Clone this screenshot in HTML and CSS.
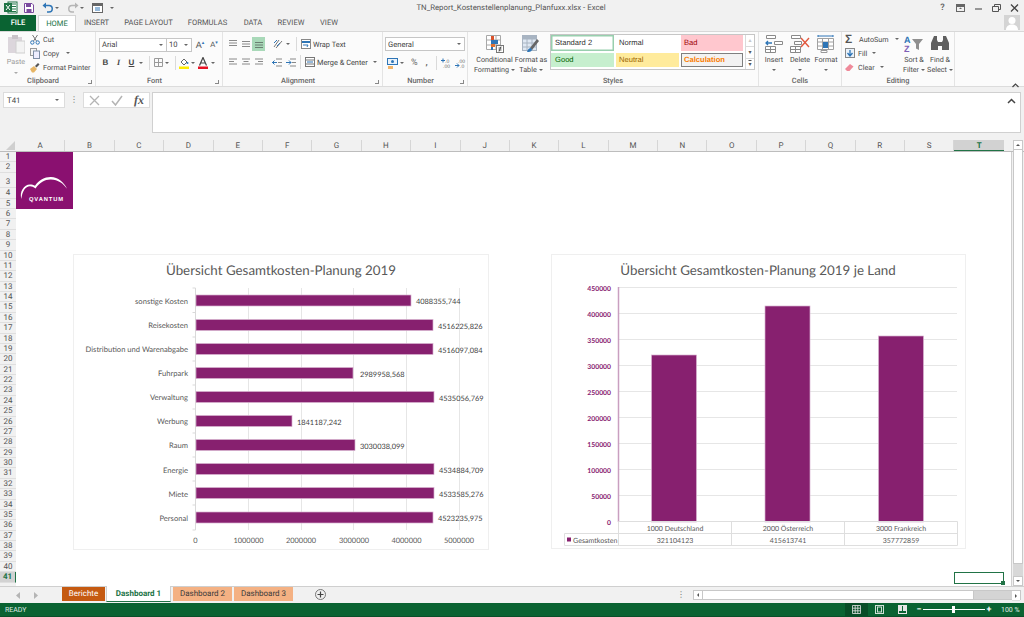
FILE: index.html
```html
<!DOCTYPE html>
<html lang="de">
<head>
<meta charset="utf-8">
<title>TN_Report_Kostenstellenplanung_Planfuxx.xlsx - Excel</title>
<link rel="stylesheet" href="styles.css">
</head>
<body>
<div class="app">
  <header class="titlebar">
    <div class="qat">
      <svg class="q1" width="14" height="13" viewBox="0 0 14 13"><rect x="4" y="1" width="9" height="11" fill="#fff" stroke="#217346"/><path d="M8 3h4M8 5.500h4M8 8h4M8 10.500h4" stroke="#217346"/><rect x="0" y="2" width="8" height="9" fill="#217346"/><path d="M2 4l4 5M6 4l-4 5" stroke="#fff"/></svg>
      <svg class="q2" width="10" height="10" viewBox="0 0 10 10"><path d="M.5.5h7.500l1.500 1.500v7.500h-9z" fill="#fff" stroke="#7a4a9e"/><rect x="2" y="1" width="5" height="3" fill="#7a4a9e"/><rect x="2.500" y="6" width="5" height="3.500" fill="#7a4a9e"/></svg>
      <svg class="q3" width="12" height="11" viewBox="0 0 12 11"><path d="M3 3.500h4a3.200 3.200 0 0 1 0 6.500H5" fill="none" stroke="#2e75b6" stroke-width="1.500"/><path d="M4 .5v6L.5 3.500z" fill="#2e75b6"/></svg>
      <i class="dd q4"></i>
      <svg class="q5" width="12" height="11" viewBox="0 0 12 11"><path d="M9 3.500H5a3.200 3.200 0 0 0 0 6.500h2" fill="none" stroke="#b5b5b5" stroke-width="1.500"/><path d="M8 .5v6l3.500-3z" fill="#b5b5b5"/></svg>
      <i class="dd q6"></i>
      <svg class="q7" width="11" height="10" viewBox="0 0 11 10"><rect x=".5" y=".5" width="10" height="9" fill="#fff" stroke="#666"/><rect x="1" y="1" width="9" height="2" fill="#666"/><path d="M3 5h5M3 7h5" stroke="#2e75b6"/></svg>
      <i class="dd q8"></i>
    </div>
    <div class="doc-title">TN_Report_Kostenstellenplanung_Planfuxx.xlsx - Excel</div>
    <div class="winbtns">
      <span class="help">?</span>
      <svg width="9" height="8" viewBox="0 0 9 8"><rect x=".5" y=".5" width="8" height="7" fill="none" stroke="#666"/><path d="M1 1h7v2H1z" fill="#666"/><path d="M3 5l1.500-1.500L6 5z" fill="#666"/></svg>
      <svg width="9" height="8" viewBox="0 0 9 8"><path d="M1 5h7" stroke="#666" stroke-width="1.300"/></svg>
      <svg width="9" height="8" viewBox="0 0 9 8"><path d="M.5 2.500h6v5h-6zM2.500 2V.5h6v5H7" fill="none" stroke="#555"/></svg>
      <svg width="9" height="8" viewBox="0 0 9 8"><path d="M1 .5l7 7M8 .5l-7 7" stroke="#444" stroke-width="1.300"/></svg>
    </div>
  </header>

  <nav class="tabs">
    <div class="tab file">FILE</div>
    <div class="tab home">HOME</div>
    <div class="tab t-insert">INSERT</div>
    <div class="tab t-layout">PAGE LAYOUT</div>
    <div class="tab t-form">FORMULAS</div>
    <div class="tab t-data">DATA</div>
    <div class="tab t-review">REVIEW</div>
    <div class="tab t-view">VIEW</div>
    <div class="avatar"><svg width="16" height="15" viewBox="0 0 16 15"><rect width="16" height="15" fill="#d4d4d4"/><circle cx="8" cy="5.500" r="3.500" fill="#fff"/><path d="M2 15c0-4 3-5.500 6-5.500s6 1.500 6 5.500z" fill="#fff"/></svg></div>
  </nav>

  <div class="ribbon">
    <section class="group g-clip">
      <div class="gbody clip-body">
        <div class="paste">
          <svg width="18" height="20" viewBox="0 0 18 20"><rect x="1" y="3" width="14" height="16" fill="#dcd6dc"/><rect x="5" y="1" width="6" height="4" fill="#c9c3c9"/><rect x="9" y="7" width="9" height="12" fill="#f3f3f3" stroke="#cfcfcf"/></svg>
          <span>Paste</span><i class="dd light"></i>
        </div>
        <div class="stack">
          <div class="srow"><svg width="10" height="11" viewBox="0 0 10 11"><path d="M2.500 1l4 6M7.500 1l-4 6" stroke="#777"/><circle cx="2.300" cy="8.500" r="1.700" fill="none" stroke="#2e75b6"/><circle cx="7.700" cy="8.500" r="1.700" fill="none" stroke="#2e75b6"/></svg><span>Cut</span></div>
          <div class="srow"><svg width="10" height="11" viewBox="0 0 10 11"><rect x=".5" y=".5" width="6" height="7" fill="#f5f5f5" stroke="#9a9a9a"/><rect x="3.500" y="3" width="6" height="7.500" fill="#eef" stroke="#7f8fa6"/></svg><span>Copy</span><i class="dd copy-dd"></i></div>
          <div class="srow"><svg width="10" height="11" viewBox="0 0 10 11"><path d="M0 7l4-3 3 3-3 3.500H2z" fill="#e6b566"/><path d="M5 4l3-3 1.500 1.500-3 3z" fill="#555"/></svg><span>Format Painter</span></div>
        </div>
      </div>
      <div class="glabel launched">Clipboard<i class="launch"></i></div>
    </section>

    <section class="group g-font">
      <div class="gbody font-body">
        <div class="frow">
          <div class="combo c-font">Arial<i class="dd"></i></div>
          <div class="combo c-size">10<i class="dd"></i></div>
          <span class="growa">A<sup>▴</sup></span>
          <span class="growa shrink">A<sup>▾</sup></span>
        </div>
        <div class="frow row2">
          <b class="fmt f-b">B</b>
          <em class="fmt f-i">I</em>
          <u class="fmt f-u">U</u><i class="dd u-dd"></i>
          <span class="vsep"></span>
          <svg class="f-border" width="9" height="9" viewBox="0 0 9 9"><path d="M.5.5h8v8h-8zM4.500.5v8M.5 4.500h8" fill="none" stroke="#9a9a9a"/></svg><i class="dd b-dd"></i>
          <span class="vsep"></span>
          <svg class="f-fill" width="10" height="12" viewBox="0 0 10 12"><path d="M2 5l3-3 3 3-3 3z" fill="#fff" stroke="#666"/><circle cx="8.500" cy="6" r="1" fill="#2e75b6"/><rect y="9.500" width="10" height="2.500" fill="#ffec00"/></svg><i class="dd c1-dd"></i>
          <svg class="f-color" width="10" height="12" viewBox="0 0 10 12"><path d="M1.500 8.500L5 .5l3.500 8M3 6h4" fill="none" stroke="#444" stroke-width="1.200"/><rect y="9.500" width="10" height="2.500" fill="#e81123"/></svg><i class="dd c2-dd"></i>
        </div>
      </div>
      <div class="glabel launched">Font<i class="launch"></i></div>
    </section>

    <section class="group g-align">
      <div class="gbody align-body">
        <div class="arow">
          <span class="aic"><svg width="10" height="8" viewBox="0 0 10 8"><path d="M1 .5h8M1 3h8M1 5.500h8" stroke="#8a8a8a"/></svg></span>
          <span class="aic"><svg width="10" height="8" viewBox="0 0 10 8"><path d="M1 1.500h8M1 4h8M1 6.500h8" stroke="#8a8a8a"/></svg></span>
          <span class="aic on"><svg width="10" height="8" viewBox="0 0 10 8"><path d="M1 2.500h8M1 5h8M1 7.500h8" stroke="#6b7f72"/></svg></span>
          <svg class="orient" width="11" height="10" viewBox="0 0 11 10"><path d="M1 8l5-7M3 9l6-7" stroke="#777"/><path d="M1 4l3-3M4 7l3-3" stroke="#2e75b6"/></svg><i class="dd or-dd"></i>
          <span class="vsep a-sep"></span>
          <svg class="wrap-ic" width="10" height="10" viewBox="0 0 10 10"><rect x=".5" y=".5" width="9" height="9" fill="#fff" stroke="#888"/><path d="M1 3h8" stroke="#2e75b6" stroke-width="2"/><path d="M2 6h5l-1 2" fill="none" stroke="#2e75b6"/></svg>
          <span class="atext">Wrap Text</span>
        </div>
        <div class="arow row2">
          <span class="aic"><svg width="10" height="8" viewBox="0 0 10 8"><path d="M1 1h8M1 3.500h5M1 6h8" stroke="#8a8a8a"/></svg></span>
          <span class="aic"><svg width="10" height="8" viewBox="0 0 10 8"><path d="M1 1h8M2.500 3.500h5M1 6h8" stroke="#8a8a8a"/></svg></span>
          <span class="aic"><svg width="10" height="8" viewBox="0 0 10 8"><path d="M1 1h8M4 3.500h5M1 6h8" stroke="#8a8a8a"/></svg></span>
          <svg class="ind1" width="10" height="9" viewBox="0 0 10 9"><path d="M4 1h6M6 4.500h4M4 8h6" stroke="#888"/><path d="M0 4.500h5M2.500 2.500L.5 4.500l2 2" fill="none" stroke="#2e75b6"/></svg>
          <svg class="ind2" width="10" height="9" viewBox="0 0 10 9"><path d="M4 1h6M6 4.500h4M4 8h6" stroke="#888"/><path d="M0 4.500h5M3 2.500l2 2-2 2" fill="none" stroke="#2e75b6"/></svg>
          <span class="vsep a-sep2"></span>
          <svg class="merge-ic" width="10" height="10" viewBox="0 0 10 10"><rect x=".5" y=".5" width="9" height="9" fill="#fff" stroke="#777"/><path d="M1 3h8M1 7h8" stroke="#777"/><path d="M2 5h6" stroke="#2e75b6"/></svg>
          <span class="atext">Merge &amp; Center</span><i class="dd m-dd"></i>
        </div>
      </div>
      <div class="glabel launched">Alignment<i class="launch"></i></div>
    </section>

    <section class="group g-num">
      <div class="gbody num-body">
        <div class="combo c-gen">General<i class="dd"></i></div>
        <div class="nrow">
          <svg class="n1" width="11" height="11" viewBox="0 0 11 11"><rect x=".5" y=".5" width="10" height="6" fill="#eaf2fa" stroke="#2e75b6"/><circle cx="5.500" cy="3.500" r="1.500" fill="#2e75b6"/><rect x="1" y="8" width="5" height="3" fill="#f2b56b"/></svg><i class="dd n-dd"></i>
          <span class="pct">%</span><b class="comma">,</b>
          <span class="vsep n-sep"></span>
          <svg class="n2" width="11" height="10" viewBox="0 0 11 10"><path d="M0 2.500h4M2 .5v4" stroke="#2e75b6"/><text x="4" y="4.500" class="dec">.0</text><text x="2" y="9.500" class="dec">.00</text></svg>
          <svg class="n3" width="11" height="10" viewBox="0 0 11 10"><text x="3" y="4.500" class="dec">.00</text><path d="M0 7.500h4M2 5.500l2 2-2 2" fill="none" stroke="#2e75b6"/><text x="5" y="9.500" class="dec">.0</text></svg>
        </div>
      </div>
      <div class="glabel launched">Number<i class="launch"></i></div>
    </section>

    <section class="group g-styles">
      <div class="gbody styles-body">
        <div class="big w-cond">
          <svg width="18" height="18" viewBox="0 0 18 18"><path d="M.5.5h14v14H.5zM5.500.5v14M10 .5v14M.5 5h14M.5 10h14" fill="#fff" stroke="#a8a8a8"/><rect x="5" y="1" width="3" height="4" fill="#d9532c"/><rect x="5" y="5" width="7" height="4" fill="#2e75b6"/><rect x="5" y="9" width="4" height="3" fill="#e0702f"/><rect x="5" y="12" width="2" height="3" fill="#2e75b6"/><rect x="10.500" y="10.500" width="7" height="7" fill="#fff" stroke="#777"/><path d="M12.500 13h3M12.500 15h3M13 16.500l2-5" stroke="#333" stroke-width=".8"/></svg>
          <span>Conditional</span><span>Formatting<i class="dd inl"></i></span>
        </div>
        <div class="big w-fmt">
          <svg width="18" height="18" viewBox="0 0 18 18"><rect x=".5" y=".5" width="14" height="15" fill="#dfe8f3" stroke="#a8b4c2"/><path d="M.5 4h14M.5 8h14M.5 12h14M5 .5v15M10 .5v15" stroke="#a8b4c2"/><rect x="1" y="1" width="13" height="3" fill="#a8b4c2"/><path d="M8 13l7-9 2 2-7 9z" fill="#666"/><path d="M5 17c1-3 2-4 4-4l1 2c-1 2-3 2-5 2z" fill="#2e75b6"/></svg>
          <span>Format as</span><span>Table<i class="dd inl"></i></span>
        </div>
        <div class="gallery">
          <div class="cells">
            <div class="cs s-std">Standard 2</div>
            <div class="cs s-norm">Normal</div>
            <div class="cs s-bad">Bad</div>
            <div class="cs s-good">Good</div>
            <div class="cs s-neu">Neutral</div>
            <div class="cs s-calc">Calculation</div>
          </div>
          <div class="gscroll"><span class="gs-off">▴</span><span>▾</span><span class="gs-more">▾</span></div>
        </div>
      </div>
      <div class="glabel">Styles</div>
    </section>

    <section class="group g-cells">
      <div class="gbody cells-body">
        <div class="big w-cell">
          <svg width="18" height="18" viewBox="0 0 18 18"><path d="M1.500.5h9v3h-9zM9.500 6.500h8v3h-8zM.5 11.500h10v6H.5zM5.500 11.500v6M.5 14.500h10" fill="#fff" stroke="#8a8a8a"/><path d="M1 8h6M3 6L1 8l2 2" fill="none" stroke="#2e75b6" stroke-width="1.300"/></svg>
          <span>Insert</span><i class="dd"></i>
        </div>
        <div class="big w-cell">
          <svg width="20" height="18" viewBox="0 0 20 18"><path d="M1.500.5h9v3h-9zM.5 11.500h10v6H.5zM5.500 11.500v6M.5 14.500h10M4.500 6.500h7v3h-7z" fill="#fff" stroke="#8a8a8a"/><path d="M11 3l8 9M19 3l-8 9" stroke="#e2583e" stroke-width="1.400"/></svg>
          <span>Delete</span><i class="dd"></i>
        </div>
        <div class="big w-cell">
          <svg width="18" height="18" viewBox="0 0 18 18"><path d="M.5 3.500h16v11H.5zM5.500 3.500v11M11.500 3.500v11M.5 7h16M.5 11h16" fill="#fff" stroke="#a0a0a0"/><rect x="6" y="7" width="5" height="6" fill="#2e75b6"/><path d="M1 1h15" stroke="#2e75b6"/><path d="M1 0v2M16 0v2" stroke="#2e75b6"/><path d="M4 15.500h6v2H4z" fill="#fff" stroke="#999"/></svg>
          <span>Format</span><i class="dd"></i>
        </div>
      </div>
      <div class="glabel">Cells</div>
    </section>

    <section class="group g-edit">
      <div class="gbody edit-body">
        <div class="stack e-stack">
          <div class="srow"><b class="sigma">Σ</b><span class="e-t">AutoSum</span><i class="dd as-dd"></i></div>
          <div class="srow"><svg width="10" height="10" viewBox="0 0 10 10"><rect x=".5" y=".5" width="9" height="9" fill="#eaf2fa" stroke="#888"/><path d="M5 2v5M2.500 5L5 8l2.500-3" fill="none" stroke="#2e75b6" stroke-width="1.300"/></svg><span class="e-t">Fill</span><i class="dd inl"></i></div>
          <div class="srow"><svg width="10" height="10" viewBox="0 0 10 10"><path d="M0 7l5-5 3.500 2.500-4 4.500H2z" fill="#ef8a9a"/></svg><span class="e-t">Clear</span><i class="dd inl"></i></div>
        </div>
        <div class="big w-sort">
          <svg width="20" height="18" viewBox="0 0 20 18"><text x="0" y="8" class="az a">A</text><text x="0" y="17" class="az z">Z</text><path d="M8 4h11l-4 5v6l-3-1.500V9z" fill="#8f8f8f"/></svg>
          <span>Sort &amp;</span><span>Filter<i class="dd inl"></i></span>
        </div>
        <div class="big w-find">
          <svg width="18" height="18" viewBox="0 0 18 18"><path d="M3 1h3v4l1 2v8H0V8zM12 1h3l3 7v7h-7V7l1-2z" fill="#5f5f5f"/><rect x="7" y="7" width="4" height="4" fill="#5f5f5f"/></svg>
          <span>Find &amp;</span><span>Select<i class="dd inl"></i></span>
        </div>
      </div>
      <div class="glabel">Editing</div>
    </section>
    <div class="collapse"><svg width="7" height="5" viewBox="0 0 7 5"><path d="M.5 4l3-3 3 3" fill="none" stroke="#444" stroke-width="1.200"/></svg></div>
  </div>

  <div class="formula">
    <div class="namebox">T41<i class="dd"></i></div>
    <div class="fdots">⋮</div>
    <div class="fbtns">
      <svg width="11" height="11" viewBox="0 0 11 11"><path d="M1 1l9 9M10 1l-9 9" stroke="#b4b4b4" stroke-width="1.300"/></svg>
      <svg width="12" height="11" viewBox="0 0 12 11"><path d="M1 6l3.500 4L11 1" fill="none" stroke="#b4b4b4" stroke-width="1.500"/></svg>
      <span class="fx">fx</span>
    </div>
    <div class="finput"><svg class="fchev" width="9" height="6" viewBox="0 0 9 6"><path d="M1 5l3.500-3.500L8 5" fill="none" stroke="#444" stroke-width="1.500"/></svg></div>
  </div>

  <div class="sheet">
    <div class="colhead">
      <div class="corner"><svg width="9" height="9" viewBox="0 0 9 9"><path d="M9 0v9H0z" fill="#cfcfcf"/></svg></div>
      <div class="col">A</div><div class="col">B</div><div class="col">C</div><div class="col">D</div><div class="col">E</div><div class="col">F</div><div class="col">G</div><div class="col">H</div><div class="col">I</div><div class="col">J</div><div class="col">K</div><div class="col">L</div><div class="col">M</div><div class="col">N</div><div class="col">O</div><div class="col">P</div><div class="col">Q</div><div class="col">R</div><div class="col">S</div><div class="col sel">T</div>
    </div>
    <div class="sheetbody">
      <div class="rowhead">
        <div class="r">1</div><div class="r">2</div><div class="r tall">3</div><div class="r">4</div><div class="r">5</div><div class="r">6</div><div class="r">7</div><div class="r">8</div><div class="r">9</div><div class="r">10</div><div class="r">11</div><div class="r">12</div><div class="r">13</div><div class="r">14</div><div class="r">15</div><div class="r">16</div><div class="r">17</div><div class="r">18</div><div class="r">19</div><div class="r">20</div><div class="r">21</div><div class="r">22</div><div class="r">23</div><div class="r">24</div><div class="r">25</div><div class="r">26</div><div class="r">27</div><div class="r">28</div><div class="r">29</div><div class="r">30</div><div class="r">31</div><div class="r">32</div><div class="r">33</div><div class="r">34</div><div class="r">35</div><div class="r">36</div><div class="r">37</div><div class="r">38</div><div class="r">39</div><div class="r">40</div><div class="r sel">41</div>
      </div>
      <div class="canvas">
        <svg class="logo" width="57" height="57" viewBox="0 0 57 57">
          <rect width="57" height="57" fill="#8a1070"/>
          <path d="M5.500 47C3 40 8 32.500 14 32.500c2 0 3.500.5 5 1.300C23 28 29 24.800 35 25c7 .3 13 5 16 11.800-3.500-5.300-9-9-16-9.300-6-.2-11 2.500-15.500 9-2-1.500-3.700-2.200-5.500-2.200C9.500 34.300 6 39.500 5.500 47z" fill="#fff"/>
          <text x="30.500" y="48.500" class="logotext">QVANTUM</text>
        </svg>

        <svg class="chart chart1" width="416" height="296" viewBox="0 0 416 296">
          <text class="ctitle" x="208" y="21">Übersicht Gesamtkosten-Planung 2019</text>
          <g class="grid">
            <path d="M175.500 34v242M228.500 34v242M280.500 34v242M333.500 34v242M386.500 34v242"/>
          </g>
          <path class="axis" d="M122.500 34v242M119.500 34h3M119.500 58.500h3M119.500 83h3M119.500 107h3M119.500 131h3M119.500 155h3M119.500 179h3M119.500 203h3M119.500 227h3M119.500 251h3M119.500 276h3"/>
          <g class="bars">
            <rect x="123" y="41" width="215" height="11"/>
            <rect x="123" y="65.500" width="237" height="11"/>
            <rect x="123" y="89.500" width="237" height="11"/>
            <rect x="123" y="113.500" width="157" height="11"/>
            <rect x="123" y="137.500" width="238" height="11"/>
            <rect x="123" y="161.500" width="96" height="11"/>
            <rect x="123" y="185.500" width="159" height="11"/>
            <rect x="123" y="209.500" width="238" height="11"/>
            <rect x="123" y="233.500" width="238" height="11"/>
            <rect x="123" y="258" width="237" height="11"/>
          </g>
          <g class="cats">
            <text x="115" y="50">sonstige Kosten</text>
            <text x="115" y="74">Reisekosten</text>
            <text x="115" y="98">Distribution und Warenabgabe</text>
            <text x="115" y="122">Fuhrpark</text>
            <text x="115" y="146">Verwaltung</text>
            <text x="115" y="170">Werbung</text>
            <text x="115" y="194">Raum</text>
            <text x="115" y="218.500">Energie</text>
            <text x="115" y="242.500">Miete</text>
            <text x="115" y="267">Personal</text>
          </g>
          <g class="vals">
            <text x="343" y="50">4088355,744</text>
            <text x="365" y="74.500">4516225,826</text>
            <text x="365" y="98.500">4516097,084</text>
            <text x="287" y="122.500">2989958,568</text>
            <text x="366" y="146.500">4535056,769</text>
            <text x="224" y="171">1841187,242</text>
            <text x="287" y="194.500">3030038,099</text>
            <text x="366" y="218.500">4534884,709</text>
            <text x="366" y="242.500">4533585,276</text>
            <text x="365" y="267">4523235,975</text>
          </g>
          <g class="xlab">
            <text x="122.500" y="289">0</text>
            <text x="175.500" y="289">1000000</text>
            <text x="228" y="289">2000000</text>
            <text x="281" y="289">3000000</text>
            <text x="333.500" y="289">4000000</text>
            <text x="386" y="289">5000000</text>
          </g>
        </svg>

        <svg class="chart chart2" width="415" height="295" viewBox="0 0 415 295">
          <text class="ctitle" x="207" y="21">Übersicht Gesamtkosten-Planung 2019 je Land</text>
          <g class="grid">
            <path d="M67 33.500h339M67 59.500h339M67 85.500h339M67 111.500h339M67 137.500h339M67 163.500h339M67 189.500h339M67 215.500h339M67 241.500h339"/>
          </g>
          <g class="bars solid">
            <rect x="100.500" y="101" width="45" height="167"/>
            <rect x="214" y="52" width="45" height="216"/>
            <rect x="327.500" y="82" width="45" height="186"/>
          </g>
          <path class="paxis" d="M67.500 33v235"/>
          <path class="tbl" d="M67.500 267.500h339M13.500 279.500h393M13.500 291.500h393M13.500 279.500v12M67.500 267.500v24M180.500 267.500v24M293.500 267.500v24M406.500 267.500v24"/>
          <g class="ylab">
            <text x="60" y="37">450000</text>
            <text x="60" y="63">400000</text>
            <text x="60" y="89">350000</text>
            <text x="60" y="115">300000</text>
            <text x="60" y="141">250000</text>
            <text x="60" y="167">200000</text>
            <text x="60" y="193">150000</text>
            <text x="60" y="219">100000</text>
            <text x="60" y="245">50000</text>
            <text x="60" y="271">0</text>
          </g>
          <g class="tcell">
            <text x="124" y="276.500">1000 Deutschland</text>
            <text x="237" y="276.500">2000 Österreich</text>
            <text x="350" y="276.500">3000 Frankreich</text>
            <text x="124" y="288.500">321104123</text>
            <text x="237" y="288.500">415613741</text>
            <text x="350" y="288.500">357772859</text>
          </g>
          <rect x="16" y="283.500" width="4" height="4" fill="#87206f"/>
          <text class="legend" x="22" y="288.500">Gesamtkosten</text>
        </svg>

        <div class="selection"><i></i></div>
      </div>
      <div class="vscroll">
        <span class="arrow up"></span>
        <span class="vthumb"></span>
        <span class="vtrack"></span>
        <span class="arrow down"></span>
      </div>
    </div>
  </div>

  <div class="sheettabs">
    <svg class="nav nav1" width="5" height="7" viewBox="0 0 5 7"><path d="M4 0v7L0 3.500z" fill="#b5b5b5"/></svg>
    <svg class="nav nav2" width="5" height="7" viewBox="0 0 5 7"><path d="M1 0v7l4-3.500z" fill="#b5b5b5"/></svg>
    <div class="stab s-ber">Berichte</div>
    <div class="stab s-d1">Dashboard 1</div>
    <div class="stab s-d2">Dashboard 2</div>
    <div class="stab s-d3">Dashboard 3</div>
    <svg class="addsheet" width="11" height="11" viewBox="0 0 11 11"><circle cx="5.500" cy="5.500" r="5" fill="none" stroke="#777"/><path d="M2.500 5.500h6M5.500 2.500v6" stroke="#444" stroke-width="1.200"/></svg>
    <span class="tdots">⋮</span>
    <div class="hscroll">
      <span class="harrow l"></span>
      <span class="hthumb"></span>
      <span class="htrack"></span>
      <span class="harrow r"></span>
    </div>
  </div>

  <footer class="status">
    <span class="ready">READY</span>
    <div class="views">
      <span class="view on"><svg width="9" height="9" viewBox="0 0 9 9"><path d="M.5.5h8v8h-8zM3.200.5v8M5.800.5v8M.5 3.200h8M.5 5.800h8" fill="none" stroke="#e6e6e6" stroke-width=".8"/></svg></span>
      <span class="view"><svg width="9" height="9" viewBox="0 0 9 9"><rect x=".5" y=".5" width="8" height="8" fill="none" stroke="#cfe0d6"/><rect x="2.500" y="2" width="4" height="5" fill="none" stroke="#cfe0d6"/></svg></span>
      <span class="view"><svg width="9" height="9" viewBox="0 0 9 9"><rect x=".5" y=".5" width="8" height="8" fill="none" stroke="#e6e6e6"/><rect x="1" y="1" width="3" height="5" fill="#e6e6e6"/><rect x="5" y="1" width="3" height="5" fill="#e6e6e6"/></svg></span>
    </div>
    <div class="zoomer">
      <span class="zb">−</span>
      <span class="slider"><i></i></span>
      <span class="zb">+</span>
      <span class="zpct">100 %</span>
    </div>
  </footer>
</div>
</body>
</html>
```
FILE: styles.css
```css
* { box-sizing: border-box; }
html, body { margin: 0; padding: 0; }
body { width: 1024px; height: 617px; overflow: hidden; background: #f1f1f1; font-family: Roboto, "Open Sans", sans-serif; font-size: 7.200px; color: #4a4a4a; text-rendering: geometricPrecision; }
.app { display: flex; flex-direction: column; width: 1024px; height: 617px; }
i { font-style: normal; }

.dd { display: inline-block; width: 0; height: 0; border-left: 2px solid transparent; border-right: 2px solid transparent; border-top: 2px solid #666; flex: none; }
.dd.light { border-top-color: #aaa; }
.dd.inl { margin-left: 2px; vertical-align: middle; }

/* title bar */
.titlebar { height: 15px; display: flex; align-items: center; position: relative; flex: none; }
.qat { display: flex; align-items: center; padding-left: 4px; width: 380px; }
.q2 { margin-left: 6px; }
.q3 { margin-left: 8px; }
.q4 { margin-left: 1px; }
.q5 { margin-left: 8px; }
.q6 { margin-left: 1px; }
.q7 { margin-left: 8px; }
.q8 { margin-left: 7px; }
.doc-title { position: absolute; left: 0; width: 1024px; top: 2px; text-align: center; padding-right: 2px; font-size: 7.800px; line-height: 12px; color: #555; }
.winbtns { margin-left: auto; display: flex; align-items: center; gap: 9px; padding-right: 5px; }
.help { font-size: 9px; width: 9px; text-align: center; font-weight: 600; color: #666; }

/* tabs */
.tabs { height: 16px; display: flex; flex: none; position: relative; font-size: 7.600px; color: #555; }
.tab { line-height: 16px; text-align: center; flex: none; }
.tab.file { width: 36px; background: #0a6332; color: #fff; font-weight: 500; }
.tab.home { width: 38px; margin-left: 2px; background: #fff; color: #217346; border: 1px solid #d4d4d4; border-bottom: 0; line-height: 15px; }
.t-insert { width: 41px; }
.t-layout { width: 63px; }
.t-form { width: 55px; }
.t-data { width: 36px; }
.t-review { width: 40px; }
.t-view { width: 36px; }
.avatar { margin-left: auto; margin-right: 4px; height: 15px; }

/* ribbon */
.ribbon { height: 56px; flex: none; background: #fbfbfb; display: flex; border-top: 1px solid #d8d8d8; border-bottom: 1px solid #dcdcdc; position: relative; }
.group { display: flex; flex-direction: column; position: relative; border-right: 1px solid #e4e4e4; flex: none; }
.gbody { flex: 1; display: flex; min-height: 0; }
.glabel { height: 11px; line-height: 11px; text-align: center; font-size: 7.400px; font-weight: 500; color: #666; position: relative; flex: none; }
.glabel.launched { padding-right: 9px; }
.launch { position: absolute; right: 3px; bottom: 2px; width: 4px; height: 4px; border-right: 1px solid #888; border-bottom: 1px solid #888; }
.g-clip { width: 96px; }
.g-font { width: 127px; }
.g-align { width: 160px; }
.g-num { width: 85px; }
.g-styles { width: 291px; }
.g-cells { width: 83px; }
.g-edit { width: 113px; }
.collapse { position: absolute; left: 1012px; top: 49px; }

.stack { display: flex; flex-direction: column; }
.srow { height: 14px; display: flex; align-items: center; gap: 3px; white-space: nowrap; }
.clip-body { padding: 0 0 0 7px; }
.paste { width: 18px; display: flex; flex-direction: column; align-items: center; color: #9a9a9a; gap: 0; line-height: 11px; padding-top: 2px; margin-right: 5px; }
.paste span { margin-top: 2px; }
.paste .dd { margin-top: 5px; }
.copy-dd { margin-left: 4px; }

.font-body { flex-direction: column; padding: 5px 0 0 3px; }
.frow { display: flex; align-items: center; height: 15px; }
.row2 { margin-top: 3px; }
.combo { height: 14px; background: #fff; border: 1px solid #c6c6c6; display: flex; align-items: center; justify-content: space-between; padding: 0 3px 0 2px; color: #444; font-size: 7.600px; flex: none; }
.c-font { width: 67px; border-right: 0; }
.c-size { width: 26px; }
.growa, .fmt { font-family: "Liberation Sans", sans-serif; flex: none; }
.growa { width: 14px; text-align: center; font-size: 9px; color: #555; margin-left: 1px; }
.growa.shrink { font-size: 7.500px; margin-left: 0; }
.growa sup { font-size: 5px; color: #2e75b6; line-height: 0; }
.fmt { font-size: 8px; width: 13px; text-align: center; color: #444; font-weight: 700; }
.f-b { margin-left: 0; }
.f-i { font-style: italic; font-family: "Liberation Serif", serif; }
.u-dd { margin-left: 1px; }
.vsep { width: 1px; height: 14px; background: #dadada; flex: none; margin-left: 6px; margin-right: 4px; }
.b-dd { margin-left: 2px; }
.f-border { flex: none; }
.f-fill { flex: none; margin-left: -1px; }
.c1-dd { margin-left: 2px; margin-right: 3px; }
.c2-dd { margin-left: 3px; }

.align-body { flex-direction: column; padding: 4px 0 0 3px; }
.arow { display: flex; align-items: center; height: 16px; }
.arow.row2 { margin-top: 2px; }
.aic { width: 13px; height: 14px; display: flex; align-items: center; justify-content: center; flex: none; }
.aic.on { background: #a9d9b9; }
.orient { margin-left: 8px; }
.or-dd { margin-left: 2px; }
.a-sep { margin-left: 6px; margin-right: 4px; }
.atext { margin-left: 2px; white-space: nowrap; color: #444; font-size: 7.400px; }
.ind1 { margin-left: 7px; }
.ind2 { margin-left: 4px; }
.a-sep2 { margin-left: 4px; margin-right: 4px; }
.m-dd { margin-left: 5px; }

.num-body { flex-direction: column; padding: 5px 0 0 2px; }
.c-gen { width: 80px; }
.nrow { display: flex; align-items: center; margin-top: 5px; padding-left: 2px; height: 14px; }
.n-dd { margin-left: 2px; }
.pct { margin-left: 7px; font-size: 9px; color: #666; }
.comma { margin-left: 8px; font-size: 9px; color: #666; line-height: 8px; }
.n-sep { margin-left: 8px; margin-right: 4px; }
.n3 { margin-left: 3px; }
.dec { font-size: 5px; fill: #666; font-family: "Liberation Sans", sans-serif; }

.styles-body { padding-left: 5px; }
.big { display: flex; flex-direction: column; align-items: center; line-height: 10px; padding-top: 3px; flex: none; white-space: nowrap; color: #4a4a4a; }
.big svg { height: 18px; margin-bottom: 2px; flex: none; }
.big .dd:not(.inl) { margin-top: 4px; }
.w-cond { width: 43px; }
.w-fmt { width: 30px; }
.gallery { display: flex; height: 36px; margin: 2px 0 0 4px; background: #fff; border: 1px solid #c6c6c6; width: 205px; flex: none; }
.cells { display: grid; grid-template-columns: 63px 63px 62px; grid-template-rows: 16px 14px; column-gap: 2px; row-gap: 2px; width: 194px; font-size: 7.600px; flex: none; }
.cs { line-height: 14px; padding-left: 3px; font-family: "Liberation Sans", sans-serif; }
.s-std { border: 1px solid #98cfae; box-shadow: inset 0 0 0 0.500px #98cfae; color: #333; padding-left: 3px; }
.s-norm { color: #333; line-height: 16px; }
.s-bad { background: #ffc7ce; color: #9c0006; line-height: 16px; }
.s-good { background: #c6efce; color: #006100; padding-left: 4px; }
.s-neu { background: #ffeb9c; color: #9c6500; }
.s-calc { background: #f2f2f2; color: #fa7d00; font-weight: 700; border: 1px solid #7f7f7f; line-height: 12px; padding-left: 2px; }
.gscroll { display: flex; flex-direction: column; width: 9px; margin-left: auto; border-left: 1px solid #dadada; font-size: 6px; text-align: center; color: #555; }
.gscroll span { height: 12px; line-height: 11px; border-bottom: 1px solid #dadada; }
.gscroll .gs-off { color: #c8c8c8; }
.gscroll .gs-more { border-bottom: 0; text-decoration: overline; }

.cells-body { padding-left: 2px; }
.w-cell { width: 26px; }
.edit-body { padding: 0 0 0 3px; }
.e-stack { width: 57px; }
.sigma { font-size: 12px; line-height: 12px; width: 11px; color: #555; font-family: "Liberation Sans", sans-serif; }
.as-dd { margin-left: 3px; }
.w-sort { width: 26px; margin-left: -1px; }
.w-find { width: 26px; }
.az { font-size: 9px; font-weight: 700; font-family: "Liberation Sans", sans-serif; }
.az.a { fill: #2e75b6; }
.az.z { fill: #7f5fb5; }

/* formula bar */
.formula { height: 47px; flex: none; display: flex; padding: 5px 3px 0 3px; align-items: flex-start; }
.namebox { width: 62px; height: 16px; background: #fff; border: 1px solid #dcdcdc; display: flex; align-items: center; justify-content: space-between; padding: 0 5px 0 3px; font-size: 7.800px; color: #444; flex: none; }
.fdots { width: 18px; text-align: center; line-height: 16px; font-size: 8px; color: #666; flex: none; }
.fbtns { width: 67px; height: 16px; background: #fff; border: 1px solid #dcdcdc; display: flex; align-items: center; padding-left: 5px; gap: 11px; flex: none; }
.fx { font-family: "Liberation Serif", serif; font-style: italic; font-size: 12px; font-weight: 700; color: #555; line-height: 14px; }
.finput { margin-left: 2px; flex: 1; height: 41px; background: #fff; border: 1px solid #d0d0d0; display: flex; justify-content: flex-end; padding: 5px 4px 0 0; }
.fchev { flex: none; }

/* sheet */
.sheet { height: 446px; flex: none; margin-top: 6px; display: flex; flex-direction: column; }
.colhead { height: 12px; display: flex; flex: none; border-bottom: 1px solid #bdbdbd; font-size: 8px; color: #555; }
.corner { width: 16px; display: flex; justify-content: flex-end; align-items: flex-end; padding: 0 1px 1px 0; flex: none; }
.col { width: 49.400px; text-align: center; line-height: 11px; border-right: 1px solid #d6d6d6; flex: none; }
.col.sel { background: #d2d2d2; color: #217346; font-weight: 700; border-bottom: 1px solid #217346; border-right: 0; }
.sheetbody { flex: 1; display: flex; min-height: 0; }
.rowhead { width: 16px; flex: none; font-size: 8px; color: #555; }
.r { height: 10.380px; line-height: 10px; text-align: center; border-bottom: 1px solid #dfdfdf; }
.r.tall { height: 15.500px; line-height: 17px; }
.r.sel { background: #d2d2d2; color: #217346; font-weight: 700; border-right: 1px solid #217346; }
.canvas { width: 996px; flex: none; background: #fff; position: relative; border-right: 1px solid #d0d0d0; }
.logo { position: absolute; left: 0; top: 0; display: block; }
.logotext { font-family: "Liberation Sans", sans-serif; font-size: 5.800px; font-weight: 700; fill: #fff; text-anchor: middle; letter-spacing: .9px; }
.chart { position: absolute; background: #fff; outline: 1px solid #efefef; outline-offset: -1px; font-family: Lato, "Liberation Sans", sans-serif; display: block; }
.chart1 { left: 57px; top: 102px; }
.chart2 { left: 535px; top: 102px; }
.ctitle { font-size: 13.350px; fill: #595959; text-anchor: middle; }
.grid path { stroke: #e6e6e6; fill: none; }
.axis { stroke: #d9d9d9; fill: none; }
.bars rect { fill: #87206f; stroke: #d8b3d0; stroke-width: .7; }
.cats text { font-size: 7.600px; fill: #595959; text-anchor: end; }
.vals text { font-size: 7.400px; fill: #404040; }
.xlab text { font-size: 7.400px; fill: #595959; text-anchor: middle; }
.paxis { stroke: #c99fc0; stroke-width: 1.500; fill: none; }
.tbl { stroke: #dedede; fill: none; }
.ylab text { font-size: 6.800px; fill: #87206f; font-weight: 700; text-anchor: end; }
.tcell text { font-size: 7px; fill: #595959; text-anchor: middle; }
.legend { font-size: 7.100px; fill: #595959; }
.selection { position: absolute; left: 938px; top: 420px; width: 50px; height: 11.500px; border: 1px solid #217346; }
.selection i { position: absolute; right: -2px; bottom: -2px; width: 4px; height: 4px; background: #217346; }
.vscroll { flex: 1; display: flex; flex-direction: column; padding: 0 1px 0 1px; margin-top: -12px; }
.arrow { height: 10px; background: #fff; border: 1px solid #c8c8c8; flex: none; display: flex; align-items: center; justify-content: center; }
.arrow::after { content: ""; border-left: 2px solid transparent; border-right: 2px solid transparent; }
.arrow.up::after { border-bottom: 2px solid #555; }
.arrow.down::after { border-top: 2px solid #555; }
.vthumb { height: 414px; background: #fff; border: 1px solid #c8c8c8; border-top: 0; flex: none; }
.vtrack { flex: 1; background: #d8d8d8; }

/* sheet tabs */
.sheettabs { height: 17px; flex: none; display: flex; align-items: flex-start; border-top: 1px solid #cfcfcf; position: relative; }
.nav { margin-top: 5px; flex: none; }
.nav1 { margin-left: 16px; }
.nav2 { margin-left: 12px; }
.stab { height: 14px; line-height: 13px; text-align: center; font-size: 8px; color: #3c3c3c; flex: none; margin-top: 0; }
.s-ber { margin-left: 24px; width: 43px; background: #c55a11; color: #fff; }
.s-d1 { margin-left: 1px; width: 65px; background: #fff; color: #217346; font-weight: 700; border-bottom: 1px solid #217346; border-left: 1px solid #cfcfcf; border-right: 1px solid #cfcfcf; height: 16px; margin-top: -1px; line-height: 16px; }
.s-d2 { margin-left: 2px; width: 59px; background: #f4b183; }
.s-d3 { margin-left: 2px; width: 59px; background: #f4b183; }
.addsheet { margin: 2px 0 0 22px; flex: none; }
.tdots { margin-left: 351px; line-height: 15px; color: #666; font-size: 8px; }
.hscroll { margin-left: 8px; width: 328px; height: 10px; margin-top: 3px; display: flex; border: 1px solid #c8c8c8; flex: none; }
.harrow { width: 8px; background: #fff; flex: none; display: flex; align-items: center; justify-content: center; }
.harrow::after { content: ""; border-top: 2px solid transparent; border-bottom: 2px solid transparent; }
.harrow.l::after { border-right: 2px solid #555; }
.harrow.r::after { border-left: 2px solid #555; }
.hthumb { width: 272px; background: #fff; border-left: 1px solid #c8c8c8; border-right: 1px solid #c8c8c8; flex: none; }
.htrack { flex: 1; background: #d4d4d4; }

/* status bar */
.status { height: 14px; flex: none; background: #0a6332; display: flex; align-items: center; color: #dfe9e3; font-size: 7px; border-bottom: 1px solid #094f29; }
.ready { margin-left: 5px; }
.views { margin-left: auto; display: flex; height: 13px; }
.view { width: 23px; display: flex; align-items: center; justify-content: center; }
.view.on { background: #084d27; }
.zoomer { display: flex; align-items: center; margin-left: 2px; width: 108px; flex: none; }
.zb { width: 6px; text-align: center; font-size: 9px; font-weight: 700; color: #fff; line-height: 10px; flex: none; }
.slider { position: relative; width: 62px; height: 1px; background: #fff; margin: 0 1px; flex: none; }
.slider i { position: absolute; left: 29px; top: -3px; width: 3px; height: 7px; background: #fff; }
.zpct { margin-left: 9px; color: #e3ece7; white-space: nowrap; }
```
